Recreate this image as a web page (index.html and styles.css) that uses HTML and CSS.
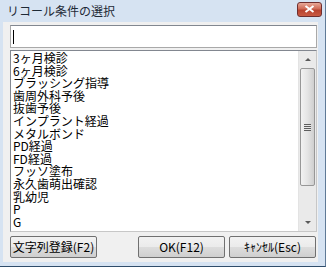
FILE: index.html
```html
<!DOCTYPE html>
<html lang="ja">
<head>
    <meta charset="UTF-8">
    <title>リコール条件の選択</title>
    <link rel="stylesheet" href="styles.css">
</head>
<body>
    <div class="window">
        <div class="titlebar">
            <span class="title">リコール条件の選択</span>
            <span class="btn-close">
                <svg width="11" height="8" viewBox="0 0 11 8"><path d="M1.5 1 L9.5 7 M9.5 1 L1.5 7" stroke="#fff" stroke-width="2"/></svg>
            </span>
        </div>
        <div class="content">
            <div class="text-input"><span class="caret"></span></div>

            <!-- リスト -->
            <div class="listbox">
                <ul class="items">
                    <li>3ヶ月検診</li>
                    <li>6ヶ月検診</li>
                    <li>ブラッシング指導</li>
                    <li>歯周外科予後</li>
                    <li>抜歯予後</li>
                    <li>インプラント経過</li>
                    <li>メタルボンド</li>
                    <li>PD経過</li>
                    <li>FD経過</li>
                    <li>フッソ塗布</li>
                    <li>永久歯萌出確認</li>
                    <li>乳幼児</li>
                    <li>P</li>
                    <li>G</li>
                </ul>
                <div class="scrollbar">
                    <div class="arrow arrow-up"></div>
                    <div class="track">
                        <div class="thumb"><span class="grip"></span></div>
                    </div>
                    <div class="arrow arrow-down"></div>
                </div>
            </div>

            <div class="buttons">
                <button type="button" class="btn btn-register">文字列登録(F2)</button>
                <div class="right-buttons">
                    <button type="button" class="btn">OK(F12)</button>
                    <button type="button" class="btn">ｷｬﾝｾﾙ(Esc)</button>
                </div>
            </div>
        </div>
    </div>
</body>
</html>
```

FILE: styles.css
```css
html, body {
    margin: 0;
    padding: 0;
}
body {
    font-family: "Noto Sans CJK JP", "DejaVu Sans", sans-serif;
    font-size: 12px;
    color: #000;
}
.window {
    width: 326px;
    height: 267px;
    box-sizing: border-box;
    background: #d6e3f2;
    border-right: 1px solid #5f7a97;
    border-bottom: 1px solid #2f4d6b;
    padding: 0 7px 4px 3px;
    display: flex;
    flex-direction: column;
}
.titlebar {
    height: 22px;
    display: flex;
    align-items: center;
    justify-content: space-between;
    padding-left: 4px;
}
.title {
    font-size: 12px;
    color: #1e2a36;
    line-height: 14px;
}
.btn-close {
    width: 25px;
    height: 15px;
    margin-right: -4px;
    margin-top: -4px;
    box-sizing: border-box;
    border: 1px solid #6f2f2f;
    border-radius: 3px;
    background: linear-gradient(#e8a898, #cf6a55 45%, #b8432f 55%, #c95b44);
    display: flex;
    align-items: center;
    justify-content: center;
}
.content {
    flex: 1;
    background: #f0f0f0;
    padding: 3px 1px 0 7px;
    display: flex;
    flex-direction: column;
}
.text-input {
    height: 23px;
    box-sizing: border-box;
    border: 1px solid #a9a9a9;
    border-top-color: #828790;
    background: #fff;
    padding: 4px 2px;
}
.caret {
    display: block;
    width: 1px;
    height: 14px;
    background: #000;
}
.listbox {
    margin-top: 2px;
    height: 182px;
    box-sizing: border-box;
    border: 1px solid #828790;
    border-right-color: #c7c7c7;
    border-bottom-color: #c7c7c7;
    background: #fff;
    display: flex;
}
.items {
    flex: 1;
    list-style: none;
    margin: 0;
    padding: 1px 0 0 2px;
}
.items li {
    height: 12.6px;
    line-height: 12.6px;
    white-space: nowrap;
}
.scrollbar {
    width: 17px;
    background: #eaeaea;
    border-left: 1px solid #e3e3e3;
    display: flex;
    flex-direction: column;
}
.arrow {
    height: 17px;
    position: relative;
}
.arrow::after {
    content: "";
    position: absolute;
    left: 6px;
    border-left: 3px solid transparent;
    border-right: 3px solid transparent;
}
.arrow-up::after {
    top: 7px;
    border-bottom: 3px solid #5a5a5a;
}
.arrow-down::after {
    top: 7px;
    border-top: 3px solid #5a5a5a;
}
.track {
    flex: 1;
}
.thumb {
    height: 118px;
    margin: 0 1px;
    box-sizing: border-box;
    border: 1px solid #979797;
    border-radius: 2px;
    background: linear-gradient(to right, #f2f2f2, #e4e4e4 50%, #cfcfcf);
    display: flex;
    align-items: center;
    justify-content: center;
}
.grip {
    width: 7px;
    height: 7px;
    background: repeating-linear-gradient(#5e5e5e 0 1px, #e8e8e8 1px 2px);
}
.buttons {
    margin-top: 4px;
    display: flex;
    justify-content: space-between;
    padding-right: 1px;
}
.right-buttons {
    display: flex;
    gap: 4px;
}
.btn {
    width: 87px;
    height: 22px;
    padding: 0;
    font-family: inherit;
    font-size: 12px;
    line-height: 14px;
    color: #000;
    border: 1px solid #707070;
    border-radius: 2px;
    background: linear-gradient(#f2f2f2, #ebebeb 50%, #dddddd 50%, #cfcfcf);
}
```
